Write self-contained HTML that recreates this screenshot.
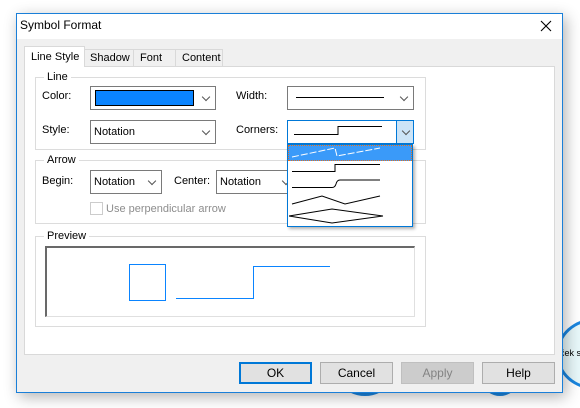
<!DOCTYPE html>
<html><head><style>
*{box-sizing:border-box;margin:0;padding:0}
body{width:580px;height:408px;background:#fff;position:relative;overflow:hidden;font-family:"Liberation Sans",sans-serif;font-size:11px;color:#000}
.a{position:absolute;white-space:nowrap}
.circ{border:3px solid #1a86e0;border-radius:50%;background:#e8f8fa}
.dlg{left:16px;top:13px;width:547px;height:380px;border:1px solid #1a7fd8;background:#f0f0f0;box-shadow:3px 4px 14px rgba(0,0,0,.3)}
.combo{background:#fff;border:1px solid #7a7a7a;height:24px}
.chev{position:absolute;right:6px;top:7px;width:6px;height:6px;border-right:1px solid #555;border-bottom:1px solid #555;transform:rotate(45deg)}
.grp{border:1px solid #dcdcdc}
.lbl{background:#fff;padding:0 3px}
.btn{top:362px;height:22px;width:73px;border:1px solid #adadad;background:#e1e1e1;text-align:center;line-height:20px;font-size:12px}
</style></head><body>
<div class="a circ" style="left:556px;top:318px;width:80px;height:72px"></div>
<div class="a" style="left:560px;top:348px;font-size:9px">ček s</div>
<div class="a circ" style="left:325px;top:300px;width:80px;height:96px"></div>
<div class="a circ" style="left:470px;top:300px;width:60px;height:96px"></div>
<div class="a dlg"></div>
<div class="a" style="left:17px;top:14px;width:545px;height:25px;background:#fff"></div>
<div class="a" style="left:20px;top:18px;font-size:12px">Symbol Format</div>
<svg class="a" style="left:540px;top:20px" width="12" height="12"><path d="M1 1L11 11M11 1L1 11" stroke="#000" stroke-width="1.1"/></svg>
<div class="a" style="left:24px;top:66px;width:531px;height:289px;background:#fff;border:1px solid #d9d9d9"></div>
<div class="a" style="left:24px;top:46px;width:61px;height:21px;background:#fff;border:1px solid #d9d9d9;border-bottom:none;padding:4px 0 0 6px">Line Style</div>
<div class="a" style="left:84px;top:49px;width:50px;height:17px;border:1px solid #d9d9d9;border-bottom:none;padding:2px 0 0 5px">Shadow</div>
<div class="a" style="left:133px;top:49px;width:43px;height:17px;border:1px solid #d9d9d9;border-bottom:none;padding:2px 0 0 6px">Font</div>
<div class="a" style="left:175px;top:49px;width:48px;height:17px;border:1px solid #d9d9d9;border-bottom:none;padding:2px 0 0 6px">Content</div>

<div class="a grp" style="left:35px;top:77px;width:391px;height:73px"></div>
<div class="a lbl" style="left:44px;top:71px">Line</div>
<div class="a" style="left:42px;top:90px">Color:</div>
<div class="a combo" style="left:90px;top:86px;width:126px"><div class="a" style="left:4px;top:3px;width:99px;height:16px;background:#0a84ff;border:1px solid #000"></div><div class="chev"></div></div>
<div class="a" style="left:236px;top:90px">Width:</div>
<div class="a combo" style="left:287px;top:86px;width:127px"><div class="a" style="left:8px;top:10px;width:88px;height:1px;background:#000"></div><div class="chev"></div></div>
<div class="a" style="left:42px;top:124px">Style:</div>
<div class="a combo" style="left:90px;top:120px;width:126px;padding:5px 0 0 3px">Notation<div class="chev"></div></div>
<div class="a" style="left:236px;top:124px">Corners:</div>
<div class="a combo" style="left:287px;top:120px;width:127px;border-color:#0078d7"><svg class="a" style="left:0;top:0" width="100" height="22"><path d="M6 13.5H50V5.5H94" stroke="#000" fill="none"/></svg><div class="a" style="left:108px;top:0;width:17px;height:22px;background:#cce4f7;border-left:1px solid #0078d7"><div class="chev" style="right:4px"></div></div></div>

<div class="a grp" style="left:35px;top:160px;width:391px;height:64px"></div>
<div class="a lbl" style="left:44px;top:154px">Arrow</div>
<div class="a" style="left:42px;top:175px">Begin:</div>
<div class="a combo" style="left:90px;top:170px;width:72px;padding:5px 0 0 3px">Notation<div class="chev"></div></div>
<div class="a" style="left:174px;top:175px">Center:</div>
<div class="a combo" style="left:216px;top:170px;width:80px;padding:5px 0 0 3px">Notation<div class="chev"></div></div>
<div class="a" style="left:90px;top:202px;width:13px;height:13px;border:1px solid #ccc"></div>
<div class="a" style="left:106px;top:203px;color:#8d8d8d">Use perpendicular arrow</div>

<div class="a grp" style="left:35px;top:236px;width:391px;height:91px"></div>
<div class="a lbl" style="left:44px;top:230px">Preview</div>
<div class="a" style="left:45px;top:246px;width:370px;height:71px;border:1px solid #e0e0e0;border-top:2px solid #696969;border-left:2px solid #696969"></div>
<svg class="a" style="left:0;top:0" width="580" height="408"><rect x="129.5" y="264.5" width="36" height="36" fill="none" stroke="#0a84ff"/><path d="M176 298.5H253.5V266.5H330" fill="none" stroke="#0a84ff"/></svg>

<div class="a" style="left:287px;top:144px;width:126px;height:83px;background:#fff;border:1px solid #0078d7;box-shadow:2px 2px 3px rgba(0,0,0,.3)"></div>
<div class="a" style="left:288px;top:145px;width:124px;height:16px;background:#3a9af9;border:1px dotted #e07020"></div>
<svg class="a" style="left:287px;top:144px" width="126" height="83"><path d="M5 13L48 4L50 12L93 4" fill="none" stroke="#fff" stroke-dasharray="7 2"/><path d="M5 27.5H48V20.5H93" fill="none" stroke="#000"/><path d="M5 43.5H45Q48 43.5 49 40Q50 36 53 36H93" fill="none" stroke="#000"/><path d="M5 60L35 52L58 60L93 52" fill="none" stroke="#000"/><path d="M2 72L45 65L96 72M2 72L45 79L96 72" fill="none" stroke="#000"/></svg>

<div class="a btn" style="left:239px;border:2px solid #0078d7;line-height:18px">OK</div>
<div class="a btn" style="left:320px">Cancel</div>
<div class="a btn" style="left:401px;background:#cccccc;border-color:#bfbfbf;color:#838383">Apply</div>
<div class="a btn" style="left:482px">Help</div>
</body></html>
